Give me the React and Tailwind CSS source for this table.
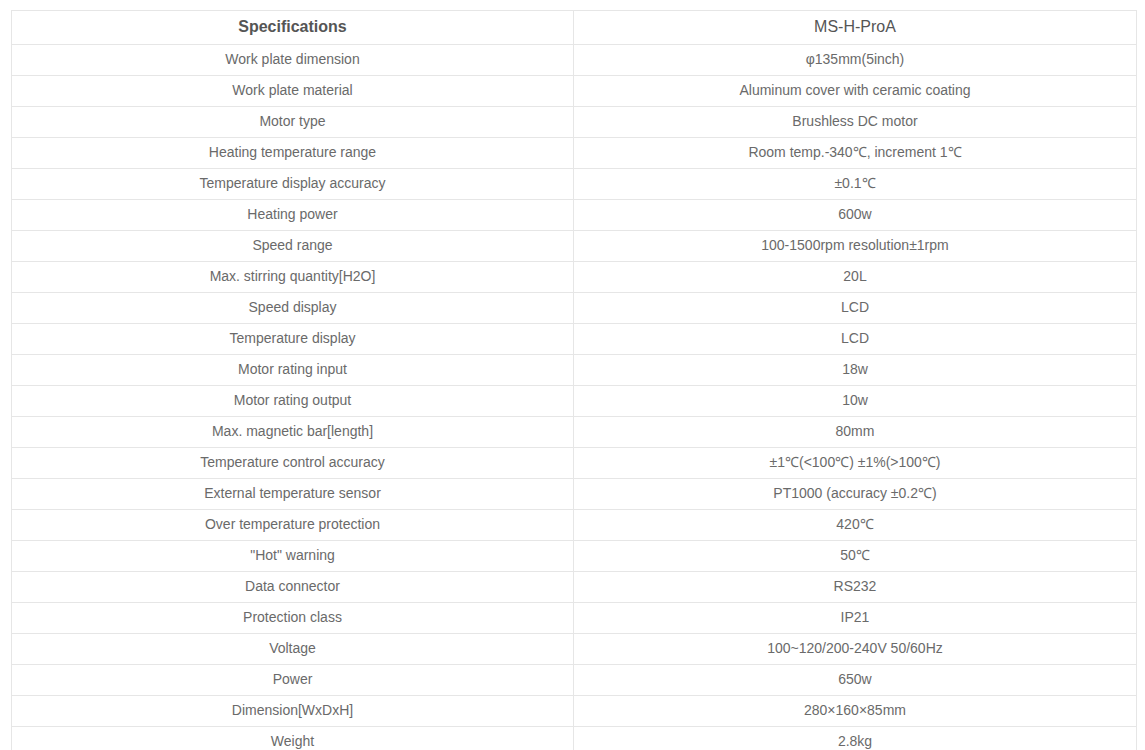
import React from 'react';

const specs = [
  ['Work plate dimension', 'φ135mm(5inch)'],
  ['Work plate material', 'Aluminum cover with ceramic coating'],
  ['Motor type', 'Brushless DC motor'],
  ['Heating temperature range', 'Room temp.-340℃, increment 1℃'],
  ['Temperature display accuracy', '±0.1℃'],
  ['Heating power', '600w'],
  ['Speed range', '100-1500rpm resolution±1rpm'],
  ['Max. stirring quantity[H2O]', '20L'],
  ['Speed display', 'LCD'],
  ['Temperature display', 'LCD'],
  ['Motor rating input', '18w'],
  ['Motor rating output', '10w'],
  ['Max. magnetic bar[length]', '80mm'],
  ['Temperature control accuracy', '±1℃(<100℃) ±1%(>100℃)'],
  ['External temperature sensor', 'PT1000 (accuracy ±0.2℃)'],
  ['Over temperature protection', '420℃'],
  ['"Hot" warning', '50℃'],
  ['Data connector', 'RS232'],
  ['Protection class', 'IP21'],
  ['Voltage', '100~120/200-240V 50/60Hz'],
  ['Power', '650w'],
  ['Dimension[WxDxH]', '280×160×85mm'],
  ['Weight', '2.8kg'],
];

export default function App() {
  return (
    <div className="min-h-screen bg-white pl-[11px] pr-[8px] pt-[10px] font-['Liberation_Sans',Arial,sans-serif]">
      <table className="w-full border-collapse table-fixed text-[14px] text-[#6a6a6a]">
        <colgroup>
          <col className="w-[562px]" />
          <col />
        </colgroup>
        <thead>
          <tr className="h-[34px]">
            <th className="border border-[#e6e6e6] pb-px text-center text-[16px] font-bold text-[#555]">Specifications</th>
            <th className="border border-[#e6e6e6] pb-px text-center text-[16px] font-normal text-[#555]">MS-H-ProA</th>
          </tr>
        </thead>
        <tbody>
          {specs.map(([name, value]) => (
            <tr key={name} className="h-[31px]">
              <td className="border border-[#e6e6e6] pb-px text-center">{name}</td>
              <td className="border border-[#e6e6e6] pb-px text-center">{value}</td>
            </tr>
          ))}
        </tbody>
      </table>
    </div>
  );
}
